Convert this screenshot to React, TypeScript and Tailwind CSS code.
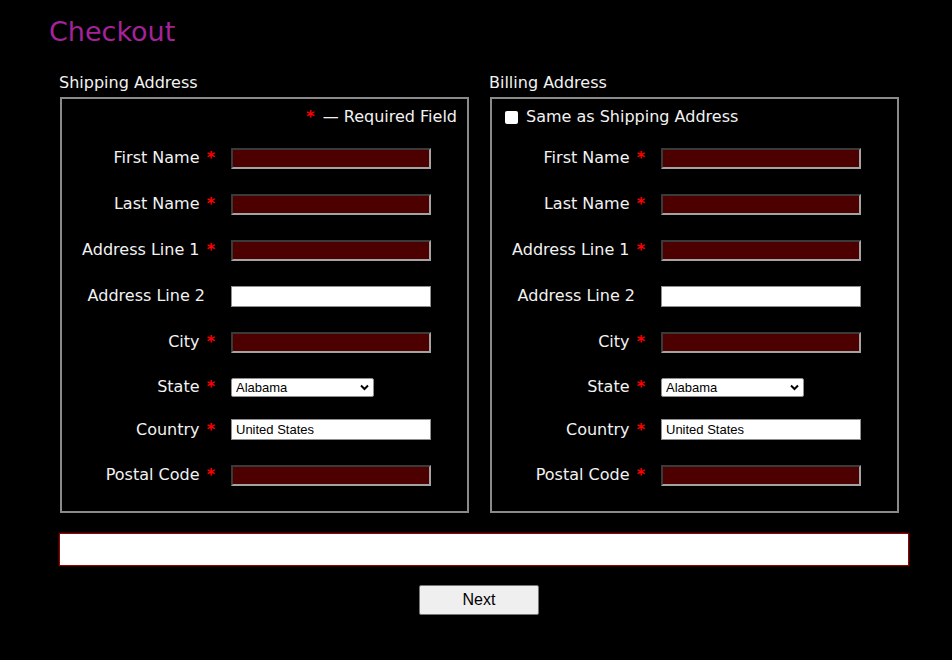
import React from "react";

const inputDark =
  "w-[200px] h-[21px] bg-[#4d0000] border-2 border-t-[#3a3a3a] border-l-[#3a3a3a] border-b-[#a3a3a3] border-r-[#a3a3a3]";
const inputWhite =
  "block w-[200px] h-[21px] bg-white border border-[#8f8f8f] px-[4px] text-[13px] text-black [font-family:'Liberation_Sans',Arial,sans-serif] outline-none";

function Req() {
  return (
    <>
      {" "}
      <span className="text-[#ff0000] font-bold ml-[2px]">*</span>
    </>
  );
}

function Row({
  label,
  required = true,
  h,
  children,
  extraPad = false,
}: {
  label: string;
  required?: boolean;
  h: string;
  children: React.ReactNode;
  extraPad?: boolean;
}) {
  return (
    <div className={`flex items-center ${h}`}>
      <div className={`w-[153px] text-right leading-[20px] ${extraPad ? "pr-[10px]" : ""}`}>
        {label}
        {required && <Req />}
      </div>
      <div className="ml-[16px] flex items-center">{children}</div>
    </div>
  );
}

function StateSelect() {
  return (
    <div className="relative w-[143px] h-[19px]">
      <select
        defaultValue="Alabama"
        className="block appearance-none w-[143px] h-[19px] bg-white border border-[#8f8f8f] rounded-[2px] pl-[4px] py-0 text-[13px] leading-[17px] text-black [font-family:'Liberation_Sans',Arial,sans-serif] outline-none"
      >
        <option>Alabama</option>
        <option>Alaska</option>
        <option>Arizona</option>
      </select>
      <svg
        className="absolute right-[5px] top-[6px] pointer-events-none"
        width="9"
        height="7"
        viewBox="0 0 9 7"
      >
        <path d="M1 1.5 L4.5 5 L8 1.5" fill="none" stroke="#000" strokeWidth="2" />
      </svg>
    </div>
  );
}

function Fields() {
  return (
    <>
      <Row label="First Name" h="h-[46px]">
        <div className={inputDark} />
      </Row>
      <Row label="Last Name" h="h-[46px]">
        <div className={inputDark} />
      </Row>
      <Row label="Address Line 1" h="h-[46px]">
        <div className={inputDark} />
      </Row>
      <Row label="Address Line 2" h="h-[46px]" required={false} extraPad>
        <input className={inputWhite} defaultValue="" />
      </Row>
      <Row label="City" h="h-[46px]">
        <div className={inputDark} />
      </Row>
      <Row label="State" h="h-[44px]">
        <StateSelect />
      </Row>
      <Row label="Country" h="h-[41px]">
        <input className={inputWhite} defaultValue="United States" />
      </Row>
      <Row label="Postal Code" h="h-[50px]">
        <div className={inputDark} />
      </Row>
    </>
  );
}

export default function App() {
  return (
    <div className="min-h-[660px] w-full bg-black text-[#f2f2f2] text-[16px] [font-family:'DejaVu_Sans',Verdana,sans-serif]">
      <div className="w-[858px] ml-[50px] pt-[17px]">
        <h1 className="text-[27px] leading-[30px] text-[#a4239a] -ml-[1px]">Checkout</h1>
        <div className="flex gap-[21px] ml-[10px] mt-[26px]">
          <div className="w-[409px]">
            <div className="leading-[19px] mb-[5px] -ml-[1px]">Shipping Address</div>
            <div className="border-2 border-[#8a8a8a] pb-[11px]">
              <div className="h-[36px] flex items-center justify-end pr-[10px]">
                <span className="text-[#ff0000] font-bold mr-[8px]">*</span>
                <span>— Required Field</span>
              </div>
              <Fields />
            </div>
          </div>
          <div className="w-[409px]">
            <div className="leading-[19px] mb-[5px] -ml-[1px]">Billing Address</div>
            <div className="border-2 border-[#8a8a8a] pb-[11px]">
              <div className="h-[36px] flex items-center pl-[13px]">
                <input
                  type="checkbox"
                  className="appearance-none w-[13px] h-[13px] bg-white rounded-[2px] m-0"
                />
                <span className="ml-[8px]">Same as Shipping Address</span>
              </div>
              <Fields />
            </div>
          </div>
        </div>
        <div className="ml-[9px] mt-[20px] w-[850px] h-[33px] bg-white border border-[#9a0000] shadow-[0_0_1px_#c00000]" />
        <div className="flex justify-center mt-[19px]">
          <button className="w-[120px] h-[30px] bg-[#efefef] border border-[#767676] rounded-[2px] text-[16px] text-black [font-family:'Liberation_Sans',Arial,sans-serif]">
            Next
          </button>
        </div>
      </div>
    </div>
  );
}
